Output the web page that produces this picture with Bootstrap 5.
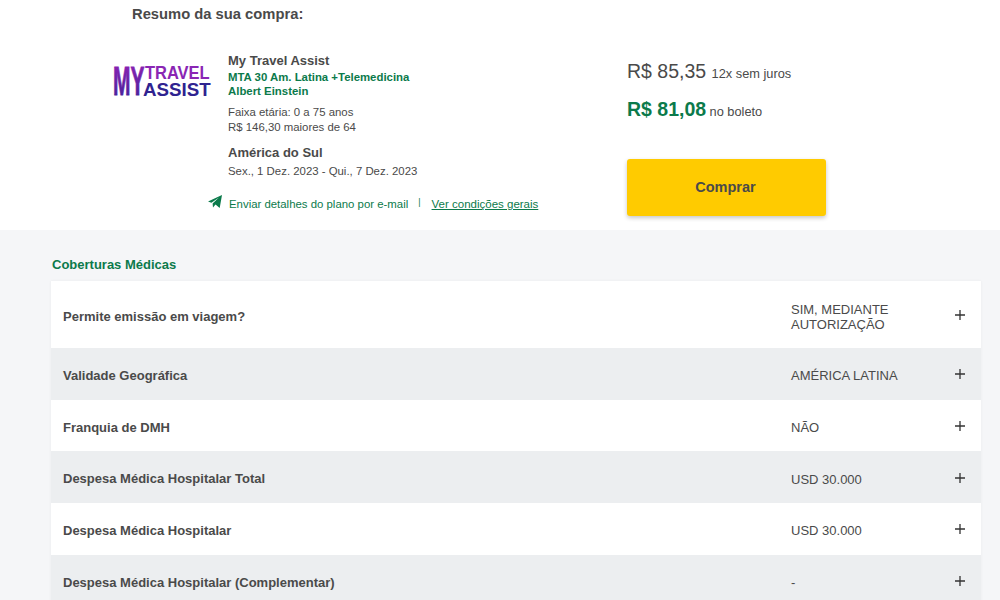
<!DOCTYPE html>
<html lang="pt-BR">
<head>
<meta charset="utf-8">
<title>Resumo da sua compra</title>
<link rel="stylesheet" href="https://cdn.jsdelivr.net/npm/bootstrap@5.3.0/dist/css/bootstrap.min.css">
<style>
html,body{height:600px;overflow:hidden}
body{font-family:"Liberation Sans",Arial,sans-serif;color:#4a4a4a;background:#f5f6f8}
.top-area{background:#fff;height:230px;padding-left:132px}
.resumo-title{font-size:14.75px;font-weight:700;line-height:17px;padding-top:6px;margin:0;color:#4a4a4a}
.summary-row{padding-top:27px}
.logo-col{width:96px;margin-left:-20px;padding-top:12px;flex:none}
.logo-col svg{display:block;overflow:visible}
.info-col{width:419px;flex:none}
.plan-name{font-size:13px;font-weight:700;line-height:15px;padding-top:3px}
.plan-green{font-size:11.4px;font-weight:700;line-height:14px;color:#0b7a4b;margin-top:2px;width:200px}
.plan-meta{font-size:11.4px;line-height:15px;margin-top:7px}
.plan-dest{font-size:13px;font-weight:700;line-height:15px;margin-top:10px}
.plan-dates{font-size:11.4px;line-height:15px;margin-top:4px}
.info-text{padding-left:20px}
.links-row{font-size:11.4px;line-height:14px;color:#0b7a4b;margin-top:18px}
.links-row a{color:#0b7a4b;font-size:11.5px}
.plane{margin-right:7px;margin-top:-4px}
.sep{margin:0 11px 0 10px;font-size:9px;position:relative;top:-2px}
.price-col{width:199px;flex:none;margin-top:-1px}
.price-main{font-size:19.5px;line-height:22px;padding-top:11px}
.price-sub{font-size:12.8px}
.price-second{font-size:19.5px;font-weight:700;color:#0b7a4b;line-height:22px;margin-top:13px}
.price-boleto{font-size:12.8px;font-weight:400;color:#4a4a4a;margin-left:-2px}
.btn-buy{display:block;width:199px;height:57px;margin-top:36px;background:#ffcb00;border:0;border-radius:3px;box-shadow:0 2px 4px rgba(0,0,0,.22);color:#4a4a4a;font-size:14.5px;font-weight:700;padding:1px 2px 0 0}
.btn-buy:hover{background:#ffcb00;color:#4a4a4a}
.cover-area{padding:27px 19px 0 51px}
.cover-title{font-size:13px;font-weight:700;line-height:16px;color:#0b7a4b;margin:0 0 8px 1px}
.cover-list{box-shadow:0 0 3px rgba(0,0,0,.05)}
.cover-row{background:#fff;min-height:51.67px;padding-left:12px;padding-top:4px;font-size:13px}
.cover-row:nth-child(even){background:#eceef0}
.cover-row.tall{height:67px}
.cover-name{font-weight:700;width:728px;flex:none}
.cover-value{width:159px;flex:none;line-height:15px}
.cover-plus{width:31px;flex:none;font-size:0;padding-left:5px;margin-top:-3px}
</style>
</head>
<body>
<section class="top-area">
  <h1 class="resumo-title">Resumo da sua compra:</h1>
  <div class="d-flex summary-row">
    <div class="logo-col">
      <svg width="98" height="36" viewBox="0 0 98 36" aria-label="My Travel Assist">
        <defs><linearGradient id="lg" x1="0" y1="0" x2="0" y2="1"><stop offset="0" stop-color="#9a22b8"/><stop offset="1" stop-color="#3a2296"/></linearGradient></defs>
        <text transform="translate(1 33) scale(.84 1.65)" font-family="Liberation Sans" font-weight="700" font-size="25" fill="url(#lg)" stroke="url(#lg)" stroke-width=".5">MY</text>
        <text transform="translate(33 17) scale(.915 1)" font-family="Liberation Sans" font-weight="700" font-size="18" fill="#8a26b4">TRAVEL</text>
        <text transform="translate(31 34) scale(1.04 1)" font-family="Liberation Sans" font-weight="700" font-size="18" fill="#2f2390">ASSIST</text>
      </svg>
    </div>
    <div class="info-col">
      <div class="info-text">
        <div class="plan-name">My Travel Assist</div>
        <div class="plan-green">MTA 30 Am. Latina +Telemedicina Albert Einstein</div>
        <div class="plan-meta">Faixa etária: 0 a 75 anos<br>R$ 146,30 maiores de 64</div>
        <div class="plan-dest">América do Sul</div>
        <div class="plan-dates">Sex., 1 Dez. 2023 - Qui., 7 Dez. 2023</div>
      </div>
      <div class="links-row d-flex align-items-center">
        <svg class="plane" width="14" height="14" viewBox="0 0 14 14"><path fill="#0b7a4b" d="M0 6.6 14 0l-2.3 13-4.2-3.6L5 12.6 4.6 8.4 11 2.6 3.4 7.7z"/></svg>
        <span>Enviar detalhes do plano por e-mail</span><span class="sep">|</span><a href="#">Ver condições gerais</a>
      </div>
    </div>
    <div class="price-col">
      <div class="price-main">R$ 85,35 <span class="price-sub">12x sem juros</span></div>
      <div class="price-second">R$ 81,08 <span class="price-boleto">no boleto</span></div>
      <button type="button" class="btn btn-buy">Comprar</button>
    </div>
  </div>
</section>
<section class="cover-area">
  <h2 class="cover-title">Coberturas Médicas</h2>
  <div class="cover-list">
    <div class="cover-row tall d-flex align-items-center"><div class="cover-name">Permite emissão em viagem?</div><div class="cover-value">SIM, MEDIANTE AUTORIZAÇÃO</div><div class="cover-plus"><svg width="10" height="10" viewBox="0 0 10 10"><path d="M5 0v10M0 5h10" stroke="#333" stroke-width="1.3"/></svg></div></div>
    <div class="cover-row d-flex align-items-center"><div class="cover-name">Validade Geográfica</div><div class="cover-value">AMÉRICA LATINA</div><div class="cover-plus"><svg width="10" height="10" viewBox="0 0 10 10"><path d="M5 0v10M0 5h10" stroke="#333" stroke-width="1.3"/></svg></div></div>
    <div class="cover-row d-flex align-items-center"><div class="cover-name">Franquia de DMH</div><div class="cover-value">NÃO</div><div class="cover-plus"><svg width="10" height="10" viewBox="0 0 10 10"><path d="M5 0v10M0 5h10" stroke="#333" stroke-width="1.3"/></svg></div></div>
    <div class="cover-row d-flex align-items-center"><div class="cover-name">Despesa Médica Hospitalar Total</div><div class="cover-value">USD 30.000</div><div class="cover-plus"><svg width="10" height="10" viewBox="0 0 10 10"><path d="M5 0v10M0 5h10" stroke="#333" stroke-width="1.3"/></svg></div></div>
    <div class="cover-row d-flex align-items-center"><div class="cover-name">Despesa Médica Hospitalar</div><div class="cover-value">USD 30.000</div><div class="cover-plus"><svg width="10" height="10" viewBox="0 0 10 10"><path d="M5 0v10M0 5h10" stroke="#333" stroke-width="1.3"/></svg></div></div>
    <div class="cover-row d-flex align-items-center"><div class="cover-name">Despesa Médica Hospitalar (Complementar)</div><div class="cover-value">-</div><div class="cover-plus"><svg width="10" height="10" viewBox="0 0 10 10"><path d="M5 0v10M0 5h10" stroke="#333" stroke-width="1.3"/></svg></div></div>
  </div>
</section>
<script src="https://cdn.jsdelivr.net/npm/bootstrap@5.3.0/dist/js/bootstrap.bundle.min.js"></script>
</body>
</html>
